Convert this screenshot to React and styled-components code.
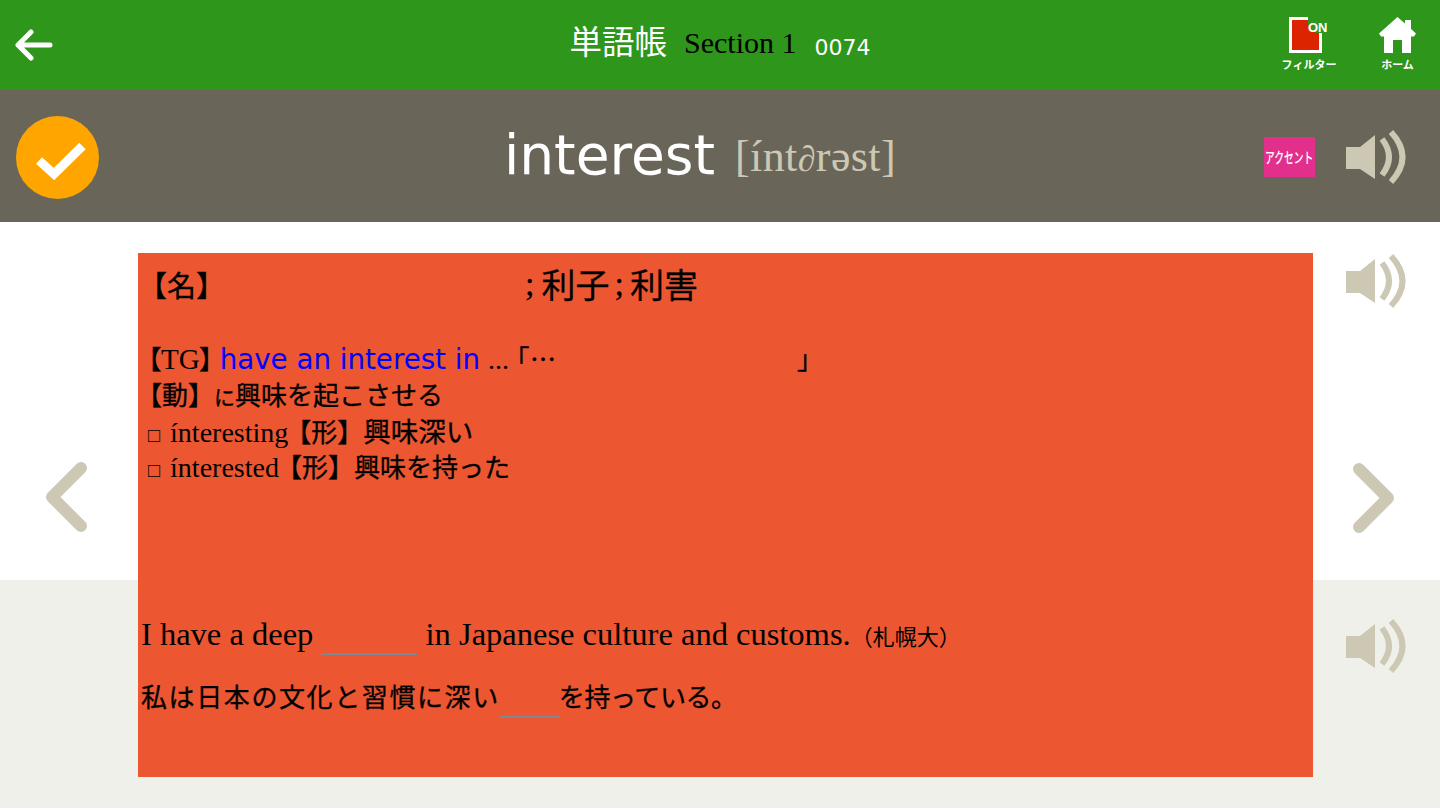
import React from "react";
import styled, { createGlobalStyle } from "styled-components";

const SERIF = `"Liberation Serif", "Noto Sans CJK JP", serif`;
const VERDANA = `"DejaVu Sans", "Noto Sans CJK JP", sans-serif`;
const JP = `"Noto Sans CJK JP", sans-serif`;

const GlobalStyle = createGlobalStyle`
  html, body {
    margin: 0;
    padding: 0;
    background: #ffffff;
    overflow: hidden;
  }
`;

const Page = styled.div`
  width: 1440px;
  height: 810px;
  display: flex;
  flex-direction: column;
  font-family: ${SERIF};
  color: #000;
`;

const Header = styled.header`
  height: 90px;
  background: #2d961b;
  display: grid;
  grid-template-columns: 1fr auto 1fr;
  align-items: start;
`;

const BackButton = styled.div`
  padding: 29px 0 0 15px;
  line-height: 0;
`;

const Title = styled.div`
  display: flex;
  align-items: flex-start;
  white-space: nowrap;
`;

const TitleJp = styled.span`
  font-family: ${JP};
  font-size: 32.5px;
  line-height: 44px;
  margin-top: 18px;
  color: #fff;
`;

const TitleSection = styled.span`
  font-size: 30px;
  line-height: 36px;
  margin: 25px 0 0 17px;
`;

const TitleNumber = styled.span`
  font-family: ${VERDANA};
  font-size: 22px;
  line-height: 28px;
  color: #fff;
  margin: 34px 0 0 18px;
`;

const HeaderTools = styled.div`
  display: flex;
  justify-content: flex-end;
  padding: 17px 24px 0 0;
  gap: 43px;
`;

const Tool = styled.div`
  display: flex;
  flex-direction: column;
  align-items: center;
  width: ${(p) => p.$width}px;
`;

const ToolLabel = styled.span`
  font-family: ${JP};
  font-weight: 700;
  font-size: 11px;
  line-height: 14px;
  margin-top: 4px;
  color: #fff;
  white-space: nowrap;
`;

const FilterBox = styled.div`
  position: relative;
  width: 33px;
  height: 36px;
  margin-right: 7px;
  box-sizing: border-box;
  border: 3px solid #fff;
  background: #dd2400;
`;

const FilterOn = styled.span`
  position: absolute;
  top: -3px;
  right: -8px;
  width: 19px;
  height: 16px;
  border-radius: 0 0 0 10px;
  background: #2d961b;
  color: #fff;
  font-family: "Liberation Sans", sans-serif;
  font-weight: 700;
  font-size: 13px;
  line-height: 22px;
  text-align: right;
`;

const WordBar = styled.section`
  height: 132px;
  box-sizing: border-box;
  padding-top: 3px;
  background: #6a6559;
  display: grid;
  grid-template-columns: 1fr auto 1fr;
  align-items: center;
`;

const CheckCircle = styled.div`
  width: 83px;
  height: 83px;
  margin-left: 16px;
  border-radius: 50%;
  background: #ffa500;
  display: flex;
  align-items: center;
  justify-content: center;
`;

const Word = styled.div`
  display: flex;
  align-items: center;
  white-space: nowrap;
  margin: 0 40px 6px 0;
`;

const Headword = styled.span`
  font-family: ${VERDANA};
  font-size: 55px;
  color: #fff;
`;

const Phonetic = styled.span`
  font-size: 44px;
  letter-spacing: 0.4px;
  color: #cdc8b4;
  margin: 4px 0 0 20px;
`;

const PhoneticSmall = styled.span`
  font-size: 36px;
`;

const WordTools = styled.div`
  display: flex;
  justify-content: flex-end;
  align-items: center;
  padding: 0 34px 1px 0;
  gap: 31px;
`;

const AccentBadge = styled.div`
  width: 51px;
  height: 40px;
  background: #e22f8c;
  display: flex;
  align-items: center;
  justify-content: center;
  overflow: hidden;
`;

const AccentText = styled.span`
  flex: none;
  color: #fff;
  font-family: ${JP};
  font-weight: 500;
  font-size: 15px;
  line-height: 40px;
  white-space: nowrap;
  transform: scaleX(0.65);
`;

const Body = styled.main`
  display: grid;
  grid-template-columns: 138px 1175px 127px;
  grid-template-rows: 358px 228px;
`;

const LowerBand = styled.div`
  grid-column: 1 / -1;
  grid-row: 2;
  background: #f0f0eb;
`;

const LeftColumn = styled.div`
  grid-column: 1;
  grid-row: 1;
  padding: 240px 0 0 46px;
  line-height: 0;
`;

const RightTop = styled.div`
  grid-column: 3;
  grid-row: 1;
  display: flex;
  flex-direction: column;
  padding: 31px 0 0 33px;
  line-height: 0;
`;

const RightChevron = styled.div`
  margin: 154px 0 0 7px;
`;

const RightBottom = styled.div`
  grid-column: 3;
  grid-row: 2;
  padding: 38px 0 0 33px;
  line-height: 0;
`;

const Panel = styled.article`
  grid-column: 2;
  grid-row: 1 / span 2;
  margin: 31px 0;
  background: #ec5631;
  z-index: 1;
`;

const MeaningLine = styled.div`
  font-family: ${JP};
  font-size: 29px;
  line-height: 40px;
  padding-top: 10px;
  height: 41px;
  white-space: nowrap;
  display: flex;
  align-items: center;
  -webkit-text-stroke: 0.3px #000;
`;

const MeaningText = styled.span`
  font-size: 34px;
`;

const Separator = styled.span`
  font-family: ${SERIF};
  font-size: 34px;
  margin: 0 ${(p) => p.$after}px 0 ${(p) => p.$before}px;
`;

const Hidden = styled.span`
  display: inline-block;
  flex: none;
  width: ${(p) => p.$width}px;
`;

const Notes = styled.div`
  margin-top: 36px;
  height: 274px;
`;

const NoteLine = styled.div`
  font-family: ${JP};
  font-size: 26px;
  line-height: 36px;
  height: 36px;
  white-space: nowrap;
  display: flex;
  align-items: baseline;
  margin-left: ${(p) => p.$indent || 0}px;
`;

const NoteJp = styled.span`
  font-size: ${(p) => p.$size || 26}px;
  -webkit-text-stroke: 0.3px #000;
`;

const Bracket = styled.span`
  font-feature-settings: "palt";
  margin: 0 ${(p) => p.$after || 0}px 0 ${(p) => p.$before || 0}px;
  -webkit-text-stroke: 0.3px #000;
`;

const Latin = styled.span`
  font-family: ${SERIF};
  font-size: ${(p) => p.$size || 28}px;
  margin: 0 ${(p) => p.$after || 0}px 0 0;
`;

const Phrase = styled.span`
  font-family: ${VERDANA};
  font-size: 27.7px;
  color: #0000ff;
  margin-right: 8px;
`;

const Small = styled.span`
  font-size: ${(p) => p.$size || 18}px;
`;

const Sentence = styled.div`
  font-size: 32.5px;
  line-height: 40px;
  padding-left: 3px;
  white-space: nowrap;
`;

const SentenceJp = styled.div`
  font-family: ${JP};
  font-size: 26px;
  line-height: 40px;
  margin-top: 18px;
  padding-left: 3px;
  white-space: nowrap;
  -webkit-text-stroke: 0.3px #000;
`;

const Spaced = styled.span`
  letter-spacing: ${(p) => p.$spacing}px;
`;

const Gap = styled.span`
  display: inline-block;
  width: ${(p) => p.$width}px;
  height: 24px;
  vertical-align: -${(p) => p.$drop}px;
  border-bottom: 2px solid #7b8a92;
`;

function Speaker() {
  return (
    <svg width="60" height="56" viewBox="0 0 60 56" fill="none">
      <path d="M0 18H14L29 6V50L14 40H0Z" fill="#cdc8b4" />
      <path d="M36 10Q50 28 36 46" stroke="#cdc8b4" strokeWidth="6" />
      <path d="M45 3Q68 28 45 53" stroke="#cdc8b4" strokeWidth="6" />
    </svg>
  );
}

function Chevron({ flip }) {
  return (
    <svg width="42" height="70" viewBox="0 0 42 70" fill="none">
      <path
        d={flip ? "M6 6L35 35L6 64" : "M35 6L6 35L35 64"}
        stroke="#cdc8b4"
        strokeWidth="12"
        strokeLinecap="round"
        strokeLinejoin="round"
      />
    </svg>
  );
}

export default function App() {
  return (
    <Page>
      <GlobalStyle />
      <Header>
        <BackButton>
          <svg width="38" height="32" viewBox="0 0 38 32" fill="none">
            <path
              d="M35 16H3M16 3L3 16L16 29"
              stroke="#fff"
              strokeWidth="5"
              strokeLinecap="round"
              strokeLinejoin="round"
            />
          </svg>
        </BackButton>
        <Title>
          <TitleJp>単語帳</TitleJp>
          <TitleSection>Section 1</TitleSection>
          <TitleNumber>0074</TitleNumber>
        </Title>
        <HeaderTools>
          <Tool $width={54}>
            <FilterBox>
              <FilterOn>ON</FilterOn>
            </FilterBox>
            <ToolLabel>フィルター</ToolLabel>
          </Tool>
          <Tool $width={37}>
            <svg width="37" height="36" viewBox="0 0 37 36">
              <path
                d="M18.5 0L26 6.5V3H32V12L37 16.5L35 19.5H32V36H23V23H14V36H5V19.5H2L0 16.5Z"
                fill="#fff"
              />
            </svg>
            <ToolLabel>ホーム</ToolLabel>
          </Tool>
        </HeaderTools>
      </Header>
      <WordBar>
        <CheckCircle>
          <svg width="56" height="44" viewBox="0 0 56 44" fill="none">
            <path d="M9 24.5L24 38L52.5 10" stroke="#fff" strokeWidth="9" />
          </svg>
        </CheckCircle>
        <Word>
          <Headword>interest</Headword>
          <Phonetic>
            [ínt<PhoneticSmall>∂</PhoneticSmall>rəst]
          </Phonetic>
        </Word>
        <WordTools>
          <AccentBadge>
            <AccentText>アクセント</AccentText>
          </AccentBadge>
          <Speaker />
        </WordTools>
      </WordBar>
      <Body>
        <LowerBand />
        <LeftColumn>
          <Chevron />
        </LeftColumn>
        <Panel>
          <MeaningLine>
            <span>【名】</span>
            <Hidden $width={292} />
            <Separator $before={8} $after={7}>;</Separator>
            <MeaningText>利子</MeaningText>
            <Separator $before={5} $after={6}>;</Separator>
            <MeaningText>利害</MeaningText>
          </MeaningLine>
          <Notes>
            <NoteLine>
              <Bracket $before={10}>【</Bracket>
              <Latin $size={29}>TG</Latin>
              <Bracket $after={7}>】</Bracket>
              <Phrase>have an interest in</Phrase>
              <Latin>...</Latin>
              <Bracket $before={7} $after={1}>「</Bracket>
              <NoteJp>…</NoteJp>
              <Hidden $width={241} />
              <NoteJp>」</NoteJp>
            </NoteLine>
            <NoteLine $indent={-2}>
              <NoteJp>【動】</NoteJp>
              <NoteJp $size={21}>に</NoteJp>
              <NoteJp>興味を起こさせる</NoteJp>
            </NoteLine>
            <NoteLine $indent={10}>
              <Latin $size={20} $after={10}>□</Latin>
              <Latin $after={-3}>ínteresting</Latin>
              <NoteJp>【形】</NoteJp>
              <NoteJp $size={27.5}>興味深い</NoteJp>
            </NoteLine>
            <NoteLine $indent={10}>
              <Latin $size={20} $after={10}>□</Latin>
              <Latin $after={-3}>ínterested</Latin>
              <NoteJp>【形】興味を持った</NoteJp>
            </NoteLine>
          </Notes>
          <Sentence>
            I have a deep <Gap $width={96} $drop={10} /> in Japanese culture and customs.
            <Small $size={22}>（札幌大）</Small>
          </Sentence>
          <SentenceJp>
            <Spaced $spacing={1.6}>私は日本の文化と習慣に深い</Spaced>
            <Gap $width={59} $drop={11} />
            <Spaced $spacing={-0.4}>を持っている。</Spaced>
          </SentenceJp>
        </Panel>
        <RightTop>
          <Speaker />
          <RightChevron>
            <Chevron flip />
          </RightChevron>
        </RightTop>
        <RightBottom>
          <Speaker />
        </RightBottom>
      </Body>
    </Page>
  );
}
